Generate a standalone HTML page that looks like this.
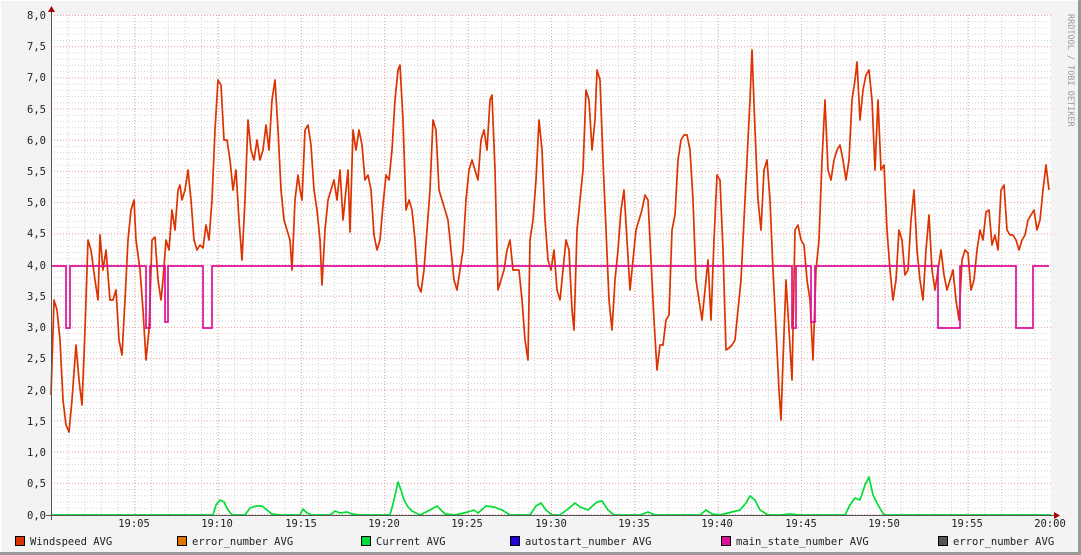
<!DOCTYPE html><html><head><style>body{margin:0;background:#f3f3f3}svg{display:block}text{font-family:"DejaVu Sans Mono","Liberation Mono",monospace;font-size:10.5px;fill:#222}</style></head><body>
<svg width="1081" height="555" viewBox="0 0 1081 555" xmlns="http://www.w3.org/2000/svg">
<defs>
<pattern id="mx" x="51" y="0" width="16.667" height="555" patternUnits="userSpaceOnUse"><line x1="0.5" y1="0" x2="0.5" y2="555" stroke="#d0d0d0" stroke-dasharray="1,2"/></pattern>
<pattern id="my" x="0" y="15" width="1081" height="6.2375" patternUnits="userSpaceOnUse"><line x1="0" y1="0.5" x2="1081" y2="0.5" stroke="#d0d0d0" stroke-dasharray="1,2"/></pattern>
<pattern id="Mx" x="51" y="0" width="83.333" height="555" patternUnits="userSpaceOnUse"><line x1="0.5" y1="0" x2="0.5" y2="555" stroke="#e8a0a0" stroke-dasharray="1,2"/></pattern>
<pattern id="My" x="0" y="15" width="1081" height="31.1875" patternUnits="userSpaceOnUse"><line x1="0" y1="0.5" x2="1081" y2="0.5" stroke="#e8a0a0" stroke-dasharray="1,2"/></pattern>
</defs>
<rect x="0" y="0" width="1081" height="555" fill="#f3f3f3"/>
<line x1="0" y1="0.5" x2="1081" y2="0.5" stroke="#fff"/><line x1="0.5" y1="0" x2="0.5" y2="555" stroke="#fff"/>
<line x1="0" y1="553.5" x2="1081" y2="553.5" stroke="#999" stroke-width="3"/><line x1="1079.5" y1="0" x2="1079.5" y2="555" stroke="#999" stroke-width="3"/>
<rect x="51" y="15" width="1000" height="500" fill="#fff"/>
<g>
<rect x="51" y="15" width="1000" height="500" fill="url(#my)"/>
<rect x="51" y="15" width="1000" height="500" fill="url(#mx)"/>
<rect x="51" y="15" width="1000" height="500" fill="url(#My)"/>
<rect x="134" y="15" width="917" height="500" fill="url(#Mx)"/>
</g>
<polyline fill="none" stroke="#dd3300" stroke-width="1.7" stroke-linejoin="round" points="51,395 54,300 57,310 60,340 63,400 66,425 69,432 72,400 76,345 79,380 82,405 85,330 88,240 91,250 95,280 98,300 100,235 103,270 106,250 110,300 113,300 116,290 119,340 122,355 125,300 128,240 131,210 134,200 136,240 140,270 143,310 146,360 149,330 152,240 155,237 158,280 161,300 163,280 166,240 169,250 172,210 175,230 178,190 180,185 182,200 185,190 188,170 191,200 194,240 197,250 200,245 203,248 206,225 209,240 212,200 215,130 218,80 221,85 224,140 227,140 230,160 233,190 236,170 239,220 242,260 245,200 248,120 251,150 254,160 257,140 260,160 263,150 266,125 269,150 272,100 275,80 278,130 281,190 284,220 287,230 290,240 292,270 295,200 298,175 300,190 302,200 305,130 308,125 311,145 314,190 317,210 320,240 322,285 325,230 328,200 331,190 334,180 337,200 340,170 343,220 346,190 348,170 350,232 353,130 356,150 359,130 362,145 365,180 368,175 371,190 374,235 377,250 380,240 383,205 386,175 389,180 392,150 395,100 398,70 400,65 403,120 406,210 409,200 412,210 415,240 418,285 421,292 424,270 427,230 430,190 433,120 436,130 439,190 442,200 445,210 448,220 451,250 454,280 457,290 460,270 463,250 466,200 469,170 472,160 475,170 478,180 481,140 484,130 487,150 490,100 492,95 495,170 498,290 501,280 504,270 507,250 510,240 513,270 516,270 519,270 522,300 525,340 528,360 530,240 533,220 536,180 539,120 542,150 545,220 548,260 551,270 554,250 557,290 560,300 563,270 566,240 569,250 572,310 574,330 577,230 580,200 583,170 586,90 589,100 592,150 595,120 597,70 600,80 603,160 606,230 609,300 612,330 615,280 618,250 621,210 624,190 627,240 630,290 633,260 636,230 639,220 642,210 645,195 648,200 651,260 654,320 657,370 660,345 663,345 666,320 669,315 672,230 675,215 678,160 681,140 684,135 687,135 690,150 693,200 696,280 699,300 702,320 705,290 708,260 711,320 714,240 717,175 720,180 723,250 726,350 729,348 732,345 735,340 738,310 741,280 744,220 747,160 750,100 752,50 755,130 758,200 761,230 764,170 767,160 770,200 773,270 776,330 779,390 781,420 783,360 786,280 789,330 792,380 795,230 798,225 801,240 804,245 807,280 810,300 813,360 816,270 819,240 822,160 825,100 828,170 831,180 834,160 837,150 840,145 843,160 846,180 849,160 852,100 855,80 857,62 860,120 863,90 866,75 869,70 872,100 875,170 878,100 881,170 884,165 887,230 890,270 893,300 896,280 899,230 902,240 905,275 908,270 911,220 914,190 917,250 920,280 923,300 926,250 929,215 932,270 935,290 938,270 941,250 944,275 947,290 950,280 953,270 956,300 959,320 962,260 965,250 968,253 971,290 974,280 977,250 980,230 983,240 986,212 989,210 992,245 995,235 998,250 1001,190 1004,185 1007,230 1010,235 1013,235 1016,240 1019,250 1022,240 1025,235 1028,220 1031,215 1034,210 1037,230 1040,220 1043,190 1046,165 1049,190"/>
<polyline fill="none" stroke="#dd1199" stroke-width="1.7" points="51,266 66,266 66,328 70,328 70,266 146,266 146,328 150,328 150,266 165,266 165,322 168,322 168,266 203,266 203,328 212,328 212,266 792,266 792,328 796,328 796,266 811,266 811,322 815,322 815,266 938,266 938,328 960,328 960,266 1016,266 1016,328 1033,328 1033,266 1049,266"/>
<polyline fill="none" stroke="#00dd33" stroke-width="1.7" stroke-linejoin="round" points="51,515 213,515 216,505 220,500 224,502 228,510 232,515 245,515 250,508 256,506 262,506 267,510 272,514 280,515 300,515 303,509 307,513 312,515 330,515 335,511 340,513 347,512 352,514 360,515 390,515 394,500 398,482 401,490 404,500 408,507 412,511 420,515 430,510 437,506 445,514 455,515 468,512 474,510 478,513 486,506 494,507 502,510 510,515 530,515 536,506 541,503 546,510 552,515 560,515 568,509 575,503 580,507 588,510 597,502 602,501 608,510 614,515 640,515 648,512 655,515 700,515 706,510 712,514 720,515 740,510 746,503 750,496 755,500 760,510 768,515 780,515 790,514 800,515 845,515 850,505 855,498 860,500 865,485 869,477 873,495 878,505 884,515 1051,515"/>
<line x1="51.5" y1="10" x2="51.5" y2="520" stroke="#555"/>
<line x1="46" y1="515.5" x2="1056" y2="515.5" stroke="#555"/>
<polygon points="48,12 55,12 51.5,6" fill="#a00"/>
<polygon points="1054,512 1054,519 1060,515.5" fill="#a00"/>
<g text-anchor="end">
<text x="46" y="19">8,0</text><text x="46" y="50">7,5</text><text x="46" y="81">7,0</text><text x="46" y="113">6,5</text><text x="46" y="144">6,0</text><text x="46" y="175">5,5</text><text x="46" y="206">5,0</text><text x="46" y="237">4,5</text><text x="46" y="269">4,0</text><text x="46" y="300">3,5</text><text x="46" y="331">3,0</text><text x="46" y="362">2,5</text><text x="46" y="394">2,0</text><text x="46" y="425">1,5</text><text x="46" y="456">1,0</text><text x="46" y="487">0,5</text><text x="46" y="519">0,0</text>
</g>
<g text-anchor="middle">
<text x="134" y="527">19:05</text><text x="217" y="527">19:10</text><text x="301" y="527">19:15</text><text x="384" y="527">19:20</text><text x="467" y="527">19:25</text><text x="551" y="527">19:30</text><text x="634" y="527">19:35</text><text x="717" y="527">19:40</text><text x="801" y="527">19:45</text><text x="884" y="527">19:50</text><text x="967" y="527">19:55</text><text x="1050" y="527">20:00</text>
</g>
<text x="1068" y="14" transform="rotate(90 1068 14)" style="font-size:8.5px;fill:#999">RRDTOOL / TOBI OETIKER</text>
<g stroke="#000" stroke-width="1">
<rect x="15.5" y="536.5" width="9" height="9" fill="#dd3300"/>
<rect x="177.5" y="536.5" width="9" height="9" fill="#dd7700"/>
<rect x="361.5" y="536.5" width="9" height="9" fill="#00dd33"/>
<rect x="510.5" y="536.5" width="9" height="9" fill="#2200dd"/>
<rect x="721.5" y="536.5" width="9" height="9" fill="#dd1199"/>
<rect x="938.5" y="536.5" width="9" height="9" fill="#555"/>
</g>
<text x="30" y="545">Windspeed AVG</text>
<text x="192" y="545">error_number AVG</text>
<text x="376" y="545">Current AVG</text>
<text x="525" y="545">autostart_number AVG</text>
<text x="736" y="545">main_state_number AVG</text>
<text x="953" y="545">error_number AVG</text>
</svg>
</body></html>
